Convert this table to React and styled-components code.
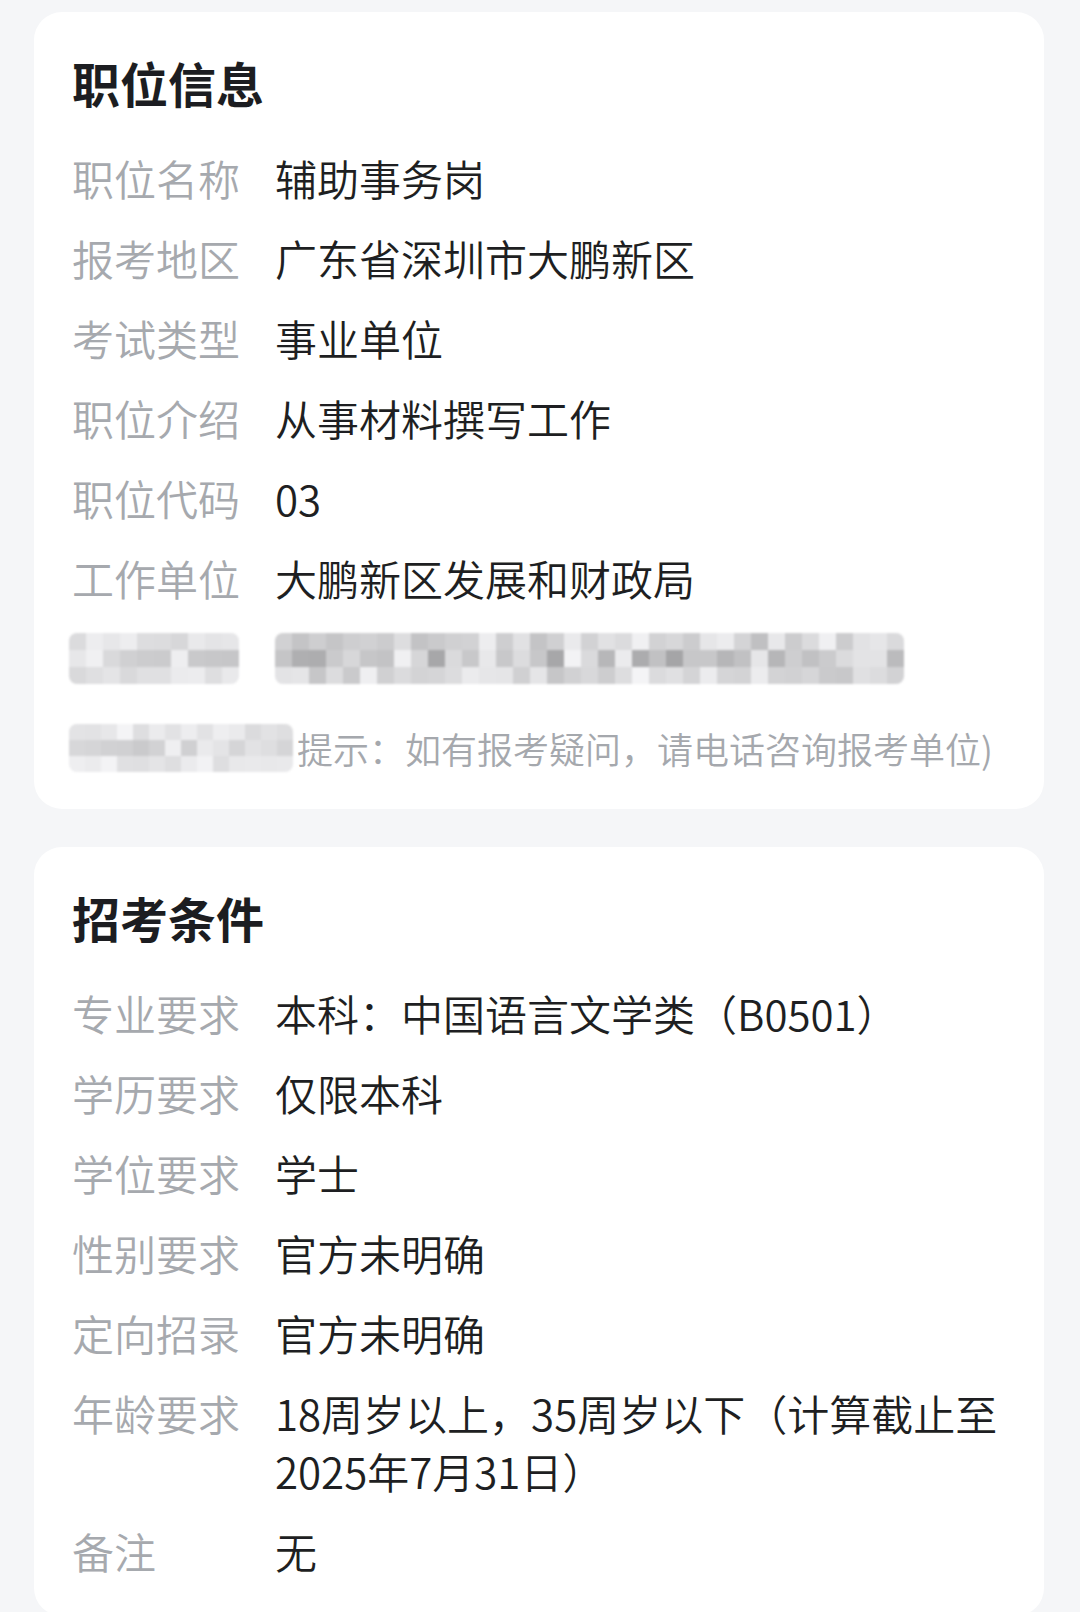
import React from "react";
import styled, { createGlobalStyle } from "styled-components";

const GlobalStyle = createGlobalStyle`
  html, body {
    margin: 0;
    padding: 0;
    background: #f5f6f8;
  }
  body {
    font-family: "Noto Sans CJK SC", "Noto Sans", sans-serif;
  }
`;

const jobInfo = [
  { label: "职位名称", value: "辅助事务岗" },
  { label: "报考地区", value: "广东省深圳市大鹏新区" },
  { label: "考试类型", value: "事业单位" },
  { label: "职位介绍", value: "从事材料撰写工作" },
  { label: "职位代码", value: "03" },
  { label: "工作单位", value: "大鹏新区发展和财政局" },
];

const conditions = [
  { label: "专业要求", value: "本科：中国语言文学类（B0501）" },
  { label: "学历要求", value: "仅限本科" },
  { label: "学位要求", value: "学士" },
  { label: "性别要求", value: "官方未明确" },
  { label: "定向招录", value: "官方未明确" },
  { label: "年龄要求", value: "18周岁以上，35周岁以下（计算截止至2025年7月31日）" },
  { label: "备注", value: "无" },
];

// little seeded random so the mosaic looks the same on every run
function makeRandom(seed) {
  let s = seed;
  return () => {
    s = (s * 9301 + 49297) % 233280;
    return s / 233280;
  };
}

function Mosaic({ cols, rows, cell, seed, dark = 0.5 }) {
  const rand = makeRandom(seed);
  const cells = [];
  for (let r = 0; r < rows; r++) {
    for (let c = 0; c < cols; c++) {
      const mid = r === Math.floor(rows / 2) ? dark : dark * 0.5;
      const v = Math.round(246 - rand() * 85 * mid - rand() * 12);
      cells.push(<MosaicCell key={`${r}-${c}`} style={{ background: `rgb(${v},${v},${v + 2})` }} />);
    }
  }
  return (
    <MosaicGrid $cols={cols} $cell={cell}>
      {cells}
    </MosaicGrid>
  );
}

function InfoRow({ label, value }) {
  return (
    <Row>
      <Label>{label}</Label>
      <Value>{value}</Value>
    </Row>
  );
}

export default function App() {
  return (
    <>
      <GlobalStyle />
      <Page>
        <Card>
          <Title>职位信息</Title>
          <List>
            {jobInfo.map((item) => (
              <InfoRow key={item.label} label={item.label} value={item.value} />
            ))}
            <BlurRow>
              <Mosaic cols={10} rows={3} cell={17} seed={11} dark={0.6} />
              <Mosaic cols={37} rows={3} cell={17} seed={37} dark={1} />
            </BlurRow>
          </List>
          <Hint>
            <Mosaic cols={14} rows={3} cell={16} seed={5} dark={0.45} />
            <HintText>提示：如有报考疑问，请电话咨询报考单位)</HintText>
          </Hint>
        </Card>

        <Card>
          <Title>招考条件</Title>
          <List>
            {conditions.map((item) => (
              <InfoRow key={item.label} label={item.label} value={item.value} />
            ))}
          </List>
        </Card>
      </Page>
    </>
  );
}

const Page = styled.div`
  display: flex;
  flex-direction: column;
  gap: 38px;
  padding: 12px 36px 40px 34px;
`;

const Card = styled.section`
  background: #ffffff;
  border-radius: 28px;
  padding: 36px 38px 36px 38px;
`;

const Title = styled.h2`
  margin: 0 0 33px 0;
  font-size: 48px;
  line-height: 68px;
  font-weight: 700;
  color: #1c1d21;
`;

const List = styled.div`
  display: flex;
  flex-direction: column;
  gap: 22px;
`;

const Row = styled.div`
  display: grid;
  grid-template-columns: 168px 1fr;
  column-gap: 35px;
  font-size: 42px;
  line-height: 58px;
  font-weight: 350;
`;

const Label = styled.div`
  color: #a6a9ae;
  white-space: nowrap;
`;

const Value = styled.div`
  color: #1e1f22;
`;

const BlurRow = styled.div`
  display: flex;
  align-items: center;
  gap: 36px;
  height: 58px;
  margin-left: -3px;
`;

const MosaicGrid = styled.div`
  display: grid;
  grid-template-columns: repeat(${(p) => p.$cols}, ${(p) => p.$cell}px);
  grid-auto-rows: ${(p) => p.$cell}px;
  border-radius: 8px;
  overflow: hidden;
  filter: blur(1px);
`;

const MosaicCell = styled.div``;

const Hint = styled.div`
  display: flex;
  align-items: center;
  gap: 4px;
  margin: 36px 0 0 -3px;
  height: 50px;
`;

const HintText = styled.span`
  font-size: 36px;
  line-height: 50px;
  font-weight: 350;
  color: #a5a8ad;
  white-space: nowrap;
`;
